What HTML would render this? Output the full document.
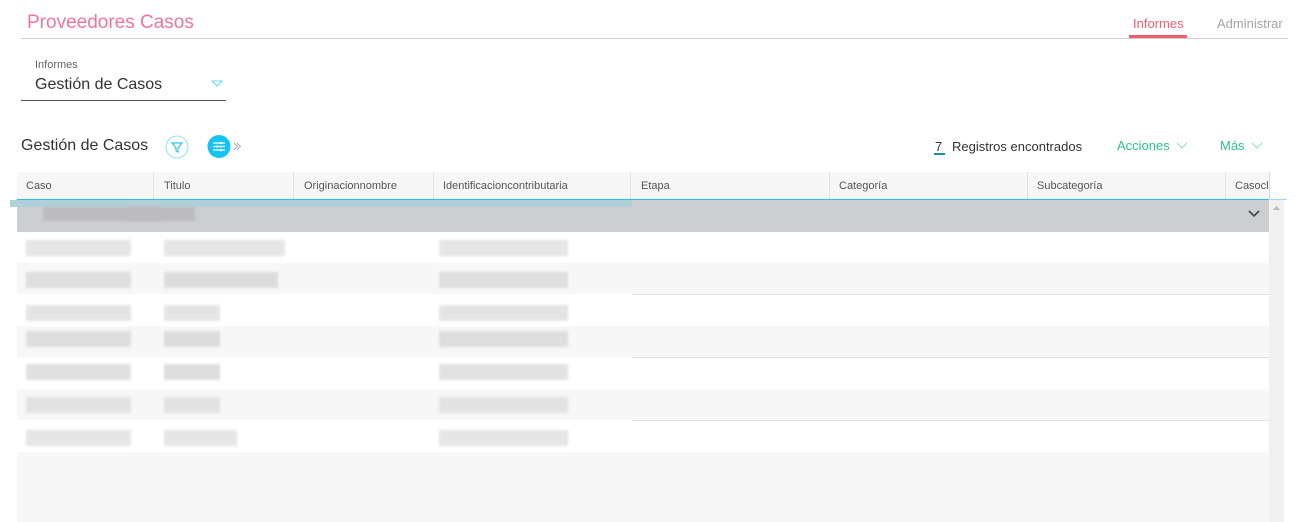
<!DOCTYPE html>
<html><head><meta charset="utf-8"><style>
*{margin:0;padding:0;box-sizing:border-box}
body{width:1297px;height:522px;overflow:hidden;background:#fff;font-family:"Liberation Sans",sans-serif;position:relative}
.a{position:absolute}
.t{position:absolute;white-space:nowrap}
.b{position:absolute;background:#dcdcdc;filter:blur(1.2px)}
.hd{position:absolute;top:172px;height:27px;font-size:11px;color:#555;padding:8px 0 0 9px;border-right:1px solid #e2e2e2}
</style></head><body>
<div class="t" style="left:27px;top:12px;font-size:19px;color:#f0759a">Proveedores Casos</div>
<div class="a" style="left:21px;top:38px;width:1267px;height:1px;background:#cfcfcf"></div>
<div class="t" style="left:1133px;top:16px;font-size:13px;color:#ef5e6e">Informes</div>
<div class="a" style="left:1129px;top:35px;width:58px;height:3px;background:#ef5e6e"></div>
<div class="t" style="left:1217px;top:16px;font-size:13px;color:#a5a5a5">Administrar</div>

<div class="t" style="left:35px;top:59px;font-size:11px;color:#666">Informes</div>
<div class="t" style="left:35px;top:76px;font-size:16px;color:#333">Gestión de Casos</div>
<svg class="a" style="left:211px;top:80px" width="12" height="8"><path d="M1 1H11L6 6Z" fill="none" stroke="#66d8ee" stroke-width="1"/></svg>
<div class="a" style="left:21px;top:100px;width:205px;height:1px;background:#555"></div>

<div class="t" style="left:21px;top:137px;font-size:16px;color:#333">Gestión de Casos</div>
<svg class="a" style="left:165px;top:135px" width="24" height="24"><circle cx="12" cy="12" r="11" fill="#fff" stroke="#8ee3f5" stroke-width="1"/><path d="M7 8H17L13 13V17L11 16V13Z" fill="none" stroke="#2cc8ee" stroke-width="1.2"/></svg>
<svg class="a" style="left:207px;top:134px" width="38" height="25"><circle cx="12" cy="12.5" r="11.5" fill="#14c3f4"/><path d="M6 9H18M6 12.5H18M6 16H18" stroke="#fff" stroke-width="1.2"/><circle cx="14" cy="9" r="1.3" fill="#fff"/><circle cx="10" cy="12.5" r="1.3" fill="#fff"/><circle cx="14" cy="16" r="1.3" fill="#fff"/><path d="M27 9L30.5 12.5L27 16M30 9L33.5 12.5L30 16" fill="none" stroke="#aaa" stroke-width="1"/></svg>

<div class="t" style="left:935px;top:139px;font-size:13px;color:#333">7</div>
<div class="a" style="left:934px;top:153px;width:11px;height:2px;background:#1a8ea8"></div>
<div class="t" style="left:952px;top:139px;font-size:13px;color:#333">Registros encontrados</div>
<div class="t" style="left:1117px;top:138px;font-size:13px;color:#2fc18a">Acciones</div>
<svg class="a" style="left:1176px;top:142px" width="12" height="8"><path d="M1 1L6 6L11 1" fill="none" stroke="#8fdcbd" stroke-width="1"/></svg>
<div class="t" style="left:1220px;top:138px;font-size:13px;color:#2fc18a">Más</div>
<svg class="a" style="left:1251px;top:142px" width="12" height="8"><path d="M1 1L6 6L11 1" fill="none" stroke="#8fdcbd" stroke-width="1"/></svg>

<div class="a" style="left:17px;top:172px;width:1252px;height:27px;background:#f7f7f7"></div>
<div class="hd" style="left:17px;width:137px">Caso</div>
<div class="hd" style="left:155px;width:139px">Titulo</div>
<div class="hd" style="left:295px;width:139px">Originacionnombre</div>
<div class="hd" style="left:434px;width:197px">Identificacioncontributaria</div>
<div class="hd" style="left:632px;width:198px">Etapa</div>
<div class="hd" style="left:830px;width:198px">Categoría</div>
<div class="hd" style="left:1028px;width:198px">Subcategoría</div>
<div class="hd" style="left:1226px;width:43px;overflow:hidden;border-right:none">Casocliente</div>
<div class="a" style="left:1269px;top:172px;width:1px;height:28px;background:#c8dfe8"></div>
<div class="a" style="left:17px;top:199px;width:1252px;height:1px;background:#2cc0e6"></div>
<div class="a" style="left:1270px;top:199px;width:17px;height:1px;background:#a8d8e8"></div>

<div class="a" style="left:17px;top:200px;width:1252px;height:32px;background:#cdced2"></div>
<div class="a" style="left:10px;top:200px;width:622px;height:7px;background:#b1cfd8"></div>
<div class="b" style="left:43px;top:207px;width:115px;height:14px;background:#bcbcc0"></div>
<div class="b" style="left:129px;top:207px;width:66px;height:14px;background:#bcbcc0"></div>
<svg class="a" style="left:1248px;top:210px" width="12" height="8"><path d="M1 1L6 6L11 1" fill="none" stroke="#444" stroke-width="1.6"/></svg>

<div class="a" style="left:17px;top:263px;width:1252px;height:31px;background:#f7f7f7"></div>
<div class="a" style="left:17px;top:326px;width:1252px;height:31px;background:#f7f7f7"></div>
<div class="a" style="left:17px;top:389px;width:1252px;height:31px;background:#f7f7f7"></div>
<div class="a" style="left:632px;top:294px;width:637px;height:1px;background:#e4e4e4"></div>
<div class="a" style="left:632px;top:357px;width:637px;height:1px;background:#e4e4e4"></div>
<div class="a" style="left:632px;top:420px;width:637px;height:1px;background:#e4e4e4"></div>
<div class="a" style="left:17px;top:452px;width:1252px;height:70px;background:#f7f7f7"></div>
<div class="a" style="left:1269px;top:200px;width:15px;height:322px;background:#f0f0f0"></div>
<svg class="a" style="left:1272px;top:205px" width="9" height="6"><path d="M1 5L4.5 1L8 5Z" fill="#bbb"/></svg>

<div class="b" style="left:26px;top:240px;width:105px;height:16px;background:#e6e6e6"></div>
<div class="b" style="left:164px;top:240px;width:121px;height:16px;background:#e6e6e6"></div>
<div class="b" style="left:439px;top:240px;width:129px;height:16px;background:#e6e6e6"></div>

<div class="b" style="left:26px;top:272px;width:105px;height:16px;background:#dedede"></div>
<div class="b" style="left:164px;top:272px;width:114px;height:16px;background:#dcdcdc"></div>
<div class="b" style="left:439px;top:272px;width:129px;height:16px;background:#dedede"></div>

<div class="b" style="left:26px;top:305px;width:105px;height:16px;background:#e4e4e4"></div>
<div class="b" style="left:164px;top:305px;width:56px;height:16px;background:#e4e4e4"></div>
<div class="b" style="left:439px;top:305px;width:129px;height:16px;background:#e4e4e4"></div>

<div class="b" style="left:26px;top:331px;width:105px;height:16px;background:#dedede"></div>
<div class="b" style="left:164px;top:331px;width:56px;height:16px;background:#dcdcdc"></div>
<div class="b" style="left:439px;top:331px;width:129px;height:16px;background:#dedede"></div>

<div class="b" style="left:26px;top:364px;width:105px;height:16px;background:#e0e0e0"></div>
<div class="b" style="left:164px;top:364px;width:56px;height:16px;background:#dedede"></div>
<div class="b" style="left:439px;top:364px;width:129px;height:16px;background:#e2e2e2"></div>

<div class="b" style="left:26px;top:397px;width:105px;height:16px;background:#e2e2e2"></div>
<div class="b" style="left:164px;top:397px;width:56px;height:16px;background:#e2e2e2"></div>
<div class="b" style="left:439px;top:397px;width:129px;height:16px;background:#e2e2e2"></div>

<div class="b" style="left:26px;top:430px;width:105px;height:16px;background:#e6e6e6"></div>
<div class="b" style="left:164px;top:430px;width:73px;height:16px;background:#e6e6e6"></div>
<div class="b" style="left:439px;top:430px;width:129px;height:16px;background:#e6e6e6"></div>
</body></html>
